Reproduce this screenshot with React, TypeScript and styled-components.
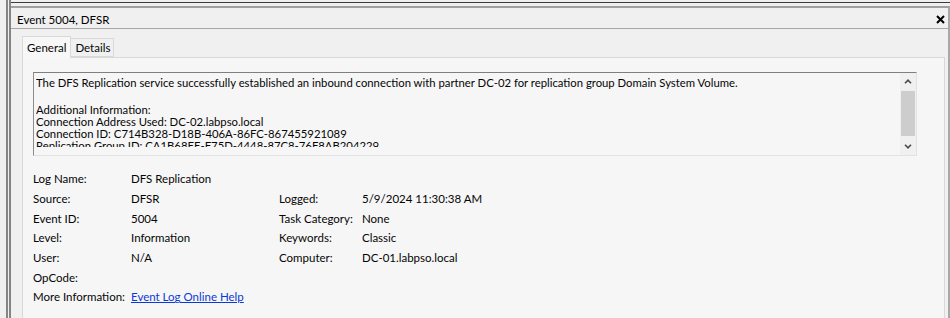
import React from "react";
import styled, { createGlobalStyle } from "styled-components";

const GlobalStyle = createGlobalStyle`
  body {
    margin: 0;
    background: #f0f0f0;
    font-family: Lato, "Segoe UI", "Noto Sans", sans-serif;
    font-size: 11.5px;
    color: #050505;
  }
`;

const backCells = [
  { w: 206, text: "Information" },
  { w: 246, text: "5/9/2024 11:30:38 AM" },
  { w: 290, text: "DFSR" },
  { w: 150, text: "5004     None" },
];

const fields: [string, React.ReactNode, string?, string?][] = [
  ["Log Name:", "DFS Replication"],
  ["Source:", "DFSR", "Logged:", "5/9/2024 11:30:38 AM"],
  ["Event ID:", "5004", "Task Category:", "None"],
  ["Level:", "Information", "Keywords:", "Classic"],
  ["User:", "N/A", "Computer:", "DC-01.labpso.local"],
  ["OpCode:", ""],
];

const Chevron = ({ up }: { up?: boolean }) => (
  <svg width="8" height="5" viewBox="0 0 8 5">
    <polyline
      points={up ? "1,4.3 4,1.2 7,4.3" : "1,0.7 4,3.8 7,0.7"}
      fill="none"
      stroke="#4a4a4a"
      strokeWidth="1.6"
    />
  </svg>
);

const App = () => {
  return (
    <>
      <GlobalStyle />
      <Frame>
        <Inner>
          <BackRow>
            {backCells.map((c) => (
              <BackCell key={c.text} $w={c.w}>
                {c.text}
              </BackCell>
            ))}
          </BackRow>
          <Dialog>
            <TitleBar>
              <Title>Event 5004, DFSR</Title>
              <CloseBtn>
                <svg width="9" height="9" viewBox="0 0 9 9">
                  <path d="M1 1 L8 8 M8 1 L1 8" stroke="#000" strokeWidth="2" />
                </svg>
              </CloseBtn>
            </TitleBar>
            <Body>
              <Tabs>
                <Tab $active>General</Tab>
                <Tab>Details</Tab>
              </Tabs>
              <Panel>
                <DescBox>
                  <DescText>
                    <DescClip>
                      <FirstPara>
                        The DFS Replication service successfully established an
                        inbound connection with partner DC-02 for replication
                        group Domain System Volume.
                      </FirstPara>
                      <div>Additional Information:</div>
                      <div>Connection Address Used: DC-02.labpso.local</div>
                      <div>Connection ID: C714B328-D18B-406A-86FC-867455921089</div>
                      <div>Replication Group ID: CA1B68EE-F75D-4448-87C8-76F8AB204229</div>
                    </DescClip>
                  </DescText>
                  <ScrollBar>
                    <ScrollBtn>
                      <Chevron up />
                    </ScrollBtn>
                    <Thumb />
                    <Track />
                    <ScrollBtn>
                      <Chevron />
                    </ScrollBtn>
                  </ScrollBar>
                </DescBox>
                <Fields>
                  {fields.map(([l1, v1, l2, v2]) => (
                    <React.Fragment key={l1}>
                      <Label>{l1}</Label>
                      <Value>{v1}</Value>
                      <Label>{l2 ?? ""}</Label>
                      <Value>{v2 ?? ""}</Value>
                    </React.Fragment>
                  ))}
                  <Label>More Information:</Label>
                  <Value>
                    <HelpLink href="#">Event Log Online Help</HelpLink>
                  </Value>
                </Fields>
              </Panel>
            </Body>
          </Dialog>
        </Inner>
      </Frame>
    </>
  );
};

export default App;

const Frame = styled.div`
  width: 950px;
  height: 318px;
  overflow: hidden;
  display: flex;
  padding-left: 6px;
  box-sizing: border-box;
  background: #f0f0f0;
`;

const Inner = styled.div`
  flex: 1;
  min-width: 0;
  display: flex;
  flex-direction: column;
  border-left: 5px double #858585;
`;

const BackRow = styled.div`
  height: 2px;
  overflow: hidden;
  display: flex;
  flex-shrink: 0;
  padding-left: 3px;
  border-bottom: 1px solid #3c3c3c;
  margin-bottom: 3px;
`;

const BackCell = styled.div<{ $w: number }>`
  width: ${({ $w }) => $w}px;
  flex-shrink: 0;
  line-height: 12px;
  margin-top: -10px;
  color: #333;
  white-space: nowrap;
`;

const Dialog = styled.div`
  flex: 1;
  display: flex;
  flex-direction: column;
  border-top: 2px solid #a0a0a0;
  border-right: 2px solid #a8a8a8;
  background: #f0f0f0;
  min-height: 0;
`;

const TitleBar = styled.div`
  height: 21px;
  flex-shrink: 0;
  display: flex;
  align-items: center;
  justify-content: space-between;
  padding: 2px 3px 0 6px;
  box-sizing: border-box;
  border-bottom: 1px solid #a6a6a6;
`;

const Title = styled.div`
  color: #000;
`;

const CloseBtn = styled.div`
  display: flex;
  align-items: center;
`;

const Body = styled.div`
  flex: 1;
  display: flex;
  flex-direction: column;
  padding: 7px 3px 0 11px;
  min-height: 0;
`;

const Tabs = styled.div`
  display: flex;
  align-items: flex-end;
  height: 21px;
  flex-shrink: 0;
  position: relative;
  z-index: 1;
`;

const Tab = styled.div<{ $active?: boolean }>`
  height: ${({ $active }) => ($active ? 22 : 19)}px;
  display: flex;
  align-items: center;
  box-sizing: border-box;
  padding: ${({ $active }) => ($active ? "0 4px 0 4px" : "0 3px 0 4px")};
  border: 1px solid #d9d9d9;
  border-bottom: ${({ $active }) => ($active ? "none" : "1px solid #d9d9d9")};
  border-left: ${({ $active }) => ($active ? "1px solid #d9d9d9" : "none")};
  background: ${({ $active }) => ($active ? "#f7f7f7" : "#f0f0f0")};
  margin-bottom: ${({ $active }) => ($active ? -1 : 0)}px;
`;

const Panel = styled.div`
  flex: 1;
  border: 1px solid #d9d9d9;
  border-bottom: none;
  background: #f6f6f6;
  padding: 14px 0 0 10px;
  min-height: 0;
`;

const DescBox = styled.div`
  width: 884px;
  height: 84px;
  box-sizing: border-box;
  display: flex;
  border-top: 1px solid #7f7f7f;
  border-left: 1px solid #8c8c8c;
  border-right: 1px solid #e2e2e2;
  border-bottom: 1px solid #e2e2e2;
  background: #f6f6f6;
`;

const DescText = styled.div`
  flex: 1;
  padding: 4px 3px 0 2px;
  font-size: 11.3px;
`;

const DescClip = styled.div`
  height: 70px;
  line-height: 12px;
  overflow: hidden;
  white-space: nowrap;
`;

const FirstPara = styled.div`
  margin-bottom: 15px;
`;

const ScrollBar = styled.div`
  width: 16px;
  display: flex;
  flex-direction: column;
  background: #f0f0f0;
`;

const ScrollBtn = styled.div`
  height: 17px;
  display: flex;
  align-items: center;
  justify-content: center;
  flex-shrink: 0;
`;

const Thumb = styled.div`
  height: 45px;
  margin: 1px 1px 0;
  background: #cdcdcd;
  flex-shrink: 0;
`;

const Track = styled.div`
  flex: 1;
`;

const Fields = styled.div`
  margin-top: 13px;
  display: grid;
  grid-template-columns: 98px 148px 83px auto;
  grid-auto-rows: 19.7px;
  align-items: center;
`;

const Label = styled.div`
  white-space: nowrap;
`;

const Value = styled.div`
  white-space: nowrap;
`;

const HelpLink = styled.a`
  color: #0a3ad6;
  text-decoration: underline;
`;
